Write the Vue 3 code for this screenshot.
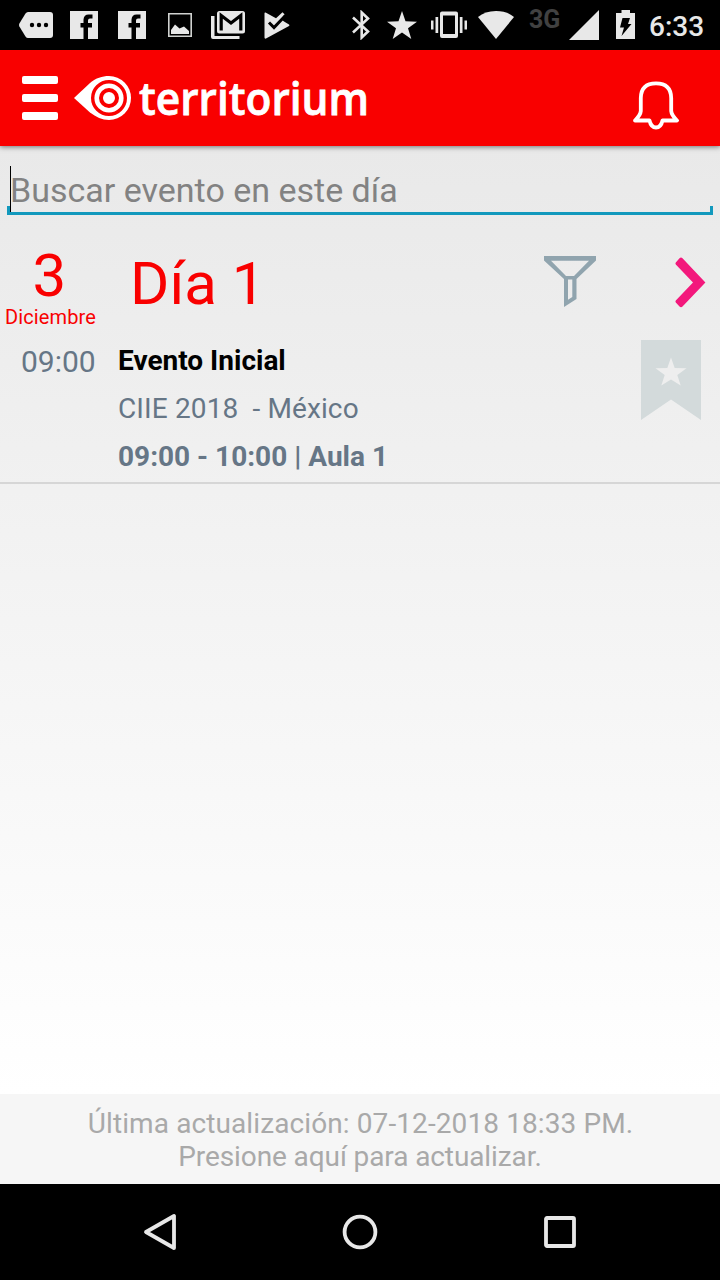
<script setup>
import { ref } from 'vue'

const query = ref('')
const event = {
  time: '09:00',
  title: 'Evento Inicial',
  place: 'CIIE 2018\u00a0 - México',
  slot: '09:00 - 10:00 | Aula 1',
}
</script>

<template>
  <div class="screen">
    <header class="status">
      <div class="notices">
        <svg class="ic-msg" width="34" height="26" viewBox="0 0 34 26">
          <path d="M9 0H31Q34 0 34 3V23Q34 26 31 26H9Q7.500 26 6.500 24.500L.4 14.500Q-.3 13 .4 11.500L6.500 1.500Q7.500 0 9 0Z" />
          <g fill="#000"><circle cx="13" cy="13" r="2.200" /><circle cx="20" cy="13" r="2.200" /><circle cx="27" cy="13" r="2.200" /></g>
        </svg>
        <svg v-for="n in 2" :key="n" class="ic-fb" width="28" height="28" viewBox="0 0 28 28">
          <path d="M0 0H28V28H18V16.500H22V12H18V9.500Q18 7.500 20 7.500H22.500V3.500H18.500Q14 3.500 13.500 8.500V12H10.500V16.500H13.500V28H0Z" />
        </svg>
        <svg class="ic-pic" width="24" height="24" viewBox="0 0 24 24">
          <path d="M.8.8H23.200V23.200H.8Z" fill="none" stroke="#d0d2d0" stroke-width="1.600" />
          <path d="M3 21V17L7 11.500L11.500 15.500L16 13.500L21 18V21Z" />
        </svg>
        <svg class="ic-mail" width="34" height="28" viewBox="0 0 34 28">
          <path d="M0 5H3.500V25H28.500V28H2Q0 28 0 26Z" />
          <rect x="6" y="0" width="28" height="22.500" rx="2.500" />
          <path d="M10.200 19.500V4.500L20 12L29.800 4.500V19.500" fill="none" stroke="#000" stroke-width="3.200" />
        </svg>
        <svg class="ic-check" width="26" height="27" viewBox="0 0 26 27">
          <path d="M1.500.5L12 6.200L18.500 .2L20.500 2.200L17.500 7.500L20 9.500L25 12.500Q26 13 25 14L2 26.500Q.5 27 .5 25.500V1.500Q.5 0 1.500.5Z" />
          <path d="M5 10.500L10 15.500L21 4" fill="none" stroke="#000" stroke-width="3" />
        </svg>
      </div>
      <div class="system">
        <svg class="ic-bt" width="18" height="30" viewBox="0 0 18 30">
          <path d="M1 7.500L16 21.500L9.700 27.500V2.500L16 8.500L1 22.500" fill="none" stroke="#e8e8e8" stroke-width="2.600" />
        </svg>
        <svg class="ic-star" width="30" height="28" viewBox="0 0 30 28">
          <path d="M15 0L18.500 10.300L30 10.700L21 17.300L24.300 28L15 21.600L5.700 28L9 17.300L0 10.700L11.500 10.300Z" />
        </svg>
        <svg class="ic-vib" width="36" height="28" viewBox="0 0 36 28">
          <path fill-rule="evenodd" d="M11 .5H25Q27 .5 27 2.500V25Q27 27 25 27H11Q9 27 9 25V2.500Q9 .5 11 .5ZM12 4.500V23H24V4.500Z" />
          <path d="M0 9.500H2.500V18.500H0ZM4.500 6H7.200V22H4.500ZM28.800 6H31.500V22H28.800ZM33.500 9.500H36V18.500H33.500Z" />
        </svg>
        <svg class="ic-wifi" width="36" height="28" viewBox="0 0 36 28">
          <path d="M0 6Q7 0 18 0T36 6L18 28Z" />
        </svg>
        <span class="net">3G</span>
        <svg class="ic-signal" width="30" height="30" viewBox="0 0 30 30"><path d="M30 0V30H0Z" /></svg>
        <svg class="ic-batt" width="19" height="29" viewBox="0 0 19 29">
          <path d="M5.500 0H14V3H19V29H0V3H5.500Z" />
          <path d="M6.500 8H14L12 14H15.500L5.500 26L8 17.500H4Z" fill="#000" />
        </svg>
        <span class="clock">6:33</span>
      </div>
    </header>

    <nav class="bar">
      <div class="menu"><i></i><i></i><i></i></div>
      <svg class="brand" width="310" height="84" viewBox="0 -16 310 84">
        <path d="M0 26L16 11C22 6 28 4 35 4A22 22 0 0 1 35 48C28 48 22 45 16 40.500Z" fill="#fff" />
        <circle cx="35" cy="26" r="16.300" fill="none" stroke="#f90000" stroke-width="3.400" />
        <circle cx="35" cy="26" r="8" fill="none" stroke="#f90000" stroke-width="4" />
        <text x="65" y="42.500" textLength="230" lengthAdjust="spacingAndGlyphs">territorium</text>
      </svg>
      <svg class="bell" width="46" height="49" viewBox="0 0 46 49">
        <path d="M7.800 17Q8 2.300 23 2.300T38.200 17V30Q38.500 34 44 39.500H29.500Q28 46.500 23 46.500T16.500 39.500H2Q7.500 34 7.800 30Z" fill="none" stroke="#fff" stroke-width="3.800" stroke-linejoin="round" />
      </svg>
    </nav>

    <main class="content">
      <div class="search">
        <input v-model="query" placeholder="Buscar evento en este día" />
        <span class="caret"></span>
      </div>

      <section class="day">
        <div class="date"><b>3</b><span>Diciembre</span></div>
        <h1>Día 1</h1>
        <svg class="filter" width="52" height="52" viewBox="0 0 52 52">
          <path fill-rule="evenodd" d="M0 0H52V4.500L32.500 23V43L20 51V23L0 4.500ZM7 4.700L22 20H30L45 4.700ZM24 23.500V43.800L28.300 41V23.500Z" fill="#90a4ae" />
        </svg>
        <svg class="next" width="31" height="52" viewBox="0 0 31 52">
          <path d="M.8 5.500L4.500 1.200Q6 0 7.500 1.200L30.400 25.500L7.500 49.500Q6 50.800 4.500 49.500L.8 45.500Q0 44.500 .8 43.500L18 25.500L.8 7.500Q0 6.500.8 5.500Z" fill="#f3187c" />
        </svg>
      </section>

      <article class="event">
        <time>{{ event.time }}</time>
        <div class="info">
          <h2>{{ event.title }}</h2>
          <p class="place">{{ event.place }}</p>
          <p class="slot">{{ event.slot }}</p>
        </div>
        <svg class="mark" width="60" height="80" viewBox="0 0 60 80">
          <path d="M0 0H60V80L30 59.500L0 80Z" fill="#d3dadb" />
          <path d="M30 17.500L33.700 28L45.500 28.300L36.300 35L39.700 45.500L30 39.400L20.300 45.500L23.700 35L14.500 28.300L26.300 28Z" fill="#eee" />
        </svg>
      </article>
    </main>

    <footer class="update">
      <div class="stamp">Última actualización: 07-12-2018 18:33 PM.</div>
      <div class="hint">Presione aquí para actualizar.</div>
    </footer>

    <div class="keys">
      <svg width="36" height="40" viewBox="0 0 36 40"><path d="M32 4V36L4 20Z" stroke-linejoin="round" /></svg>
      <svg width="36" height="40" viewBox="0 0 36 40"><circle cx="18" cy="20" r="15.400" /></svg>
      <svg width="36" height="40" viewBox="0 0 36 40"><rect x="4" y="6" width="28" height="28" rx="1" /></svg>
    </div>
  </div>
</template>

<style>
body { margin: 0; }
</style>

<style scoped>
.screen {
  width: 720px;
  height: 1280px;
  display: flex;
  flex-direction: column;
  overflow: hidden;
  font-family: Roboto, "Liberation Sans", sans-serif;
}
svg { display: block; flex: none; }
.status {
  height: 50px;
  flex: none;
  display: flex;
  justify-content: space-between;
  background: #000;
}
.status svg { fill: #e8e8e8; }
.notices, .system { display: flex; align-items: flex-start; }
.notices { padding-left: 19px; }
.system { padding-right: 16px; }
.ic-msg { margin-top: 12px; margin-right: 17px; }
.ic-fb { margin-top: 11px; margin-right: 20px; }
.ic-pic { margin-top: 13px; margin-left: 2px; margin-right: 19px; }
.ic-mail { margin-top: 11px; margin-right: 19px; }
.ic-check { margin-top: 12px; }
.ic-bt { margin-top: 10px; margin-right: 17px; }
.ic-star { margin-top: 11px; margin-right: 14px; }
.ic-vib { margin-top: 11px; margin-right: 11px; }
.ic-wifi { margin-top: 11px; margin-right: 15px; }
.net {
  width: 40px;
  margin-top: 4px;
  font-size: 25px;
  line-height: 31px;
  font-weight: 700;
  color: #414141;
}
.ic-signal { margin-top: 10px; margin-right: 17px; }
.ic-batt { margin-top: 10px; margin-right: 14px; }
.clock {
  width: 55px;
  margin-top: 10px;
  font-size: 28px;
  line-height: 34px;
  font-weight: 500;
  color: #e8e8e8;
  white-space: nowrap;
}
.bar {
  height: 96px;
  flex: none;
  display: flex;
  align-items: flex-start;
  background: #f90000;
  box-shadow: 0 1px 5px rgba(0, 0, 0, .5);
  z-index: 1;
}
.menu {
  display: flex;
  flex-direction: column;
  gap: 10.200px;
  width: 36px;
  margin: 25.700px 16px 0 22px;
}
.menu i { height: 8.100px; border-radius: 2px; background: #fff; }
.brand { margin-top: 6px; }
.brand text {
  font-family: "Open Sans", "Noto Sans", sans-serif;
  font-size: 45px;
  font-weight: 600;
  fill: #fff;
  stroke: #fff;
  stroke-width: .8px;
}
.bell { margin: 31px 41px 0 auto; }
.content {
  display: flow-root;
  flex: 1;
  background: linear-gradient(#e9e9e9, #fff);
}
.search {
  position: relative;
  height: 49px;
  margin: 20px 7px 0;
  box-sizing: border-box;
}
.search::after {
  content: "";
  position: absolute;
  inset: auto 0 0;
  height: 9px;
  box-sizing: border-box;
  border: solid #1299bd;
  border-width: 0 3px 3px;
}
.search input {
  display: block;
  width: 100%;
  height: 49px;
  box-sizing: border-box;
  padding: 0 3px;
  border: 0;
  outline: 0;
  background: none;
  font: 34px/49px Roboto, "Liberation Sans", sans-serif;
}
.search input::placeholder { color: #828282; opacity: 1; }
.caret {
  position: absolute;
  left: 3px;
  top: 0;
  width: 1px;
  height: 46px;
  background: #000;
}
.day {
  height: 125px;
  display: flex;
  align-items: flex-start;
  color: #f90000;
}
.date {
  width: 101px;
  padding-top: 26px;
  display: flex;
  flex-direction: column;
  align-items: center;
}
.date b { width: 36px; font-size: 60px; line-height: 70px; font-weight: 400; }
.date span { font-size: 20px; line-height: 24px; margin-top: -6px; letter-spacing: .1px; }
.day h1 {
  width: 412px;
  margin: 34px 0 0 29px;
  font-size: 60px;
  line-height: 70px;
  font-weight: 400;
}
.filter { margin: 41px 79px 0 2px; }
.next { margin-top: 42px; }
.event {
  height: 142px;
  display: flex;
  border-bottom: 2px solid #d6d6d6;
}
.event time {
  width: 97px;
  padding-left: 21px;
  font-size: 30px;
  line-height: 43px;
  color: #667686;
}
.info { width: 523px; }
.info h2, .info p {
  margin: 0;
  font-size: 28px;
  line-height: 48px;
  height: 48px;
  color: #667686;
  white-space: pre;
}
.info h2 { line-height: 42px; font-weight: 700; color: #000; height: 45px; }
.info .place { letter-spacing: .12px; }
.info .slot { font-weight: 700; }
.update {
  height: 90px;
  flex: none;
  box-sizing: border-box;
  padding-top: 13px;
  background: #f6f6f6;
  color: #a9a9a9;
  font-size: 28px;
  line-height: 33px;
  text-align: center;
}
.stamp { letter-spacing: .1px; padding-left: 1px; }
.hint { letter-spacing: -.1px; }
.keys {
  height: 96px;
  flex: none;
  display: flex;
  justify-content: center;
  align-items: center;
  gap: 164px;
  background: #000;
}
.keys svg { fill: none; stroke: #e8e8e8; stroke-width: 3.800px; }
</style>
